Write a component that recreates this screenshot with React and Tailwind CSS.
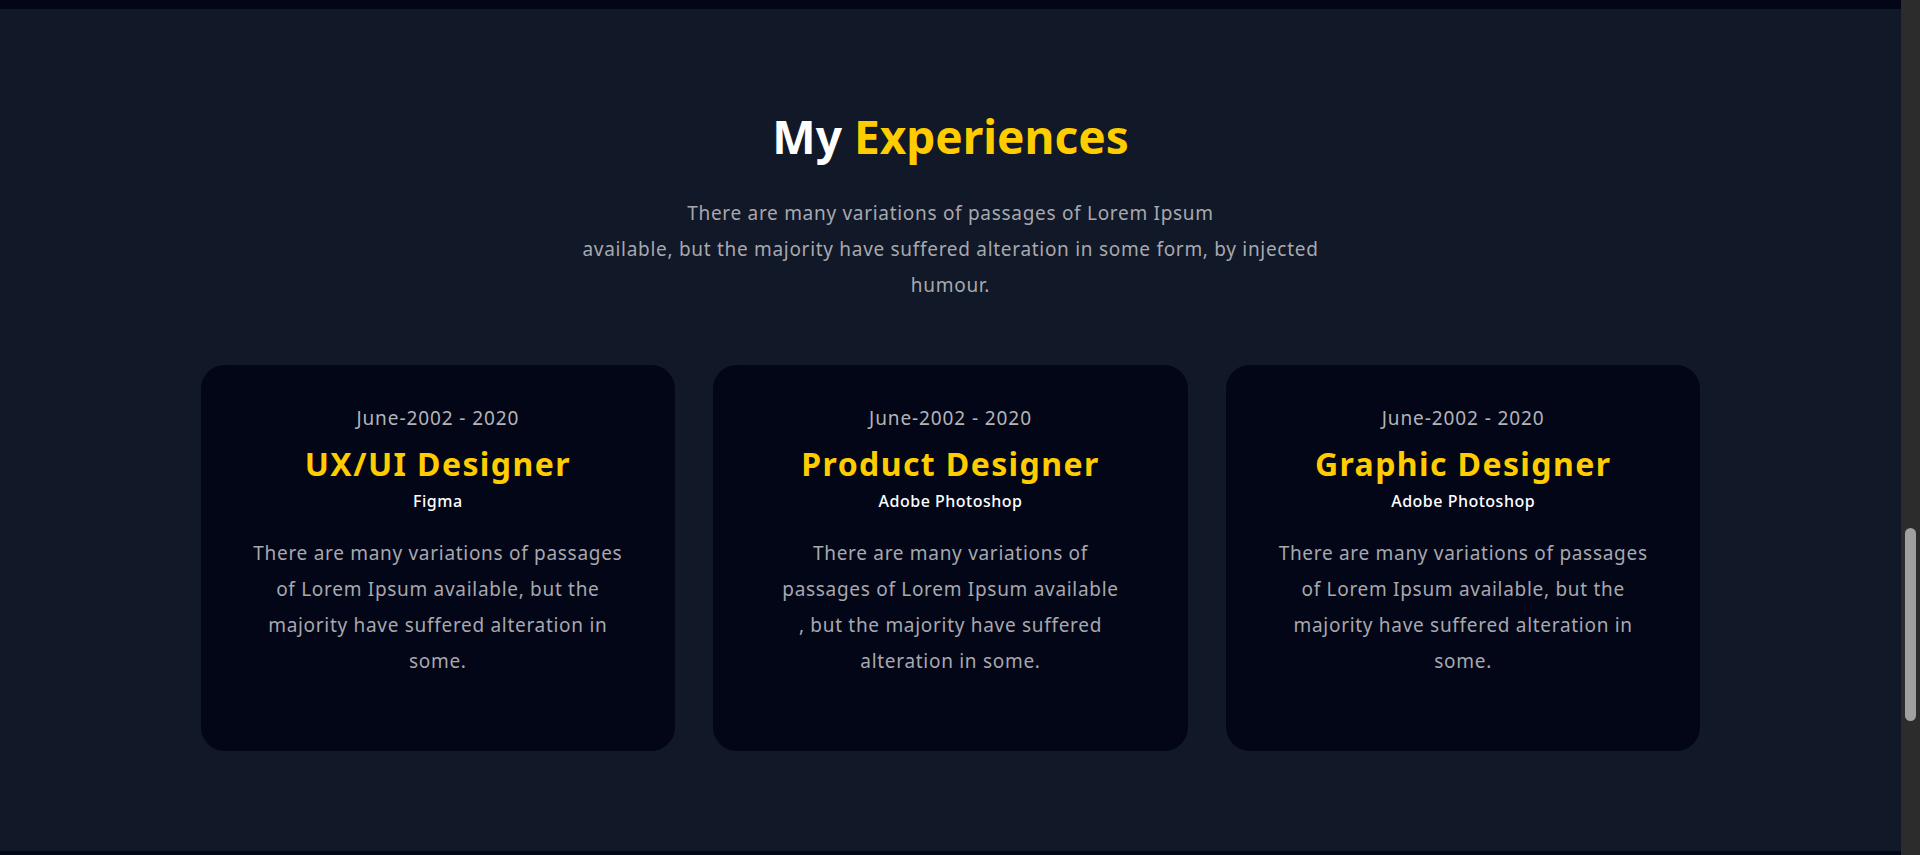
const experiences = [
  {
    period: "June-2002 - 2020",
    title: "UX/UI Designer",
    tool: "Figma",
    lines: [
      "There are many variations of passages",
      "of Lorem Ipsum available, but the",
      "majority have suffered alteration in",
      "some.",
    ],
  },
  {
    period: "June-2002 - 2020",
    title: "Product Designer",
    tool: "Adobe Photoshop",
    lines: [
      "There are many variations of",
      "passages of Lorem Ipsum available",
      ", but the majority have suffered",
      "alteration in some.",
    ],
  },
  {
    period: "June-2002 - 2020",
    title: "Graphic Designer",
    tool: "Adobe Photoshop",
    lines: [
      "There are many variations of passages",
      "of Lorem Ipsum available, but the",
      "majority have suffered alteration in",
      "some.",
    ],
  },
]

function ExperienceCard({ period, title, tool, lines }) {
  return (
    <div className="flex h-[386px] flex-col items-center rounded-3xl bg-[#020617] pt-[39px] text-center">
      <p className="text-[19px] leading-[28px] tracking-[0.9px] text-[#b4b4b8]">{period}</p>
      <h3 className="mt-3 text-[32px] font-bold leading-[40px] tracking-[1.4px] text-[#ffcc00]">{title}</h3>
      <p className="mt-[7px] text-[16px] font-medium leading-[20px] tracking-[0.5px] text-white">{tool}</p>
      <p className="mt-6 text-[19px] leading-[36px] tracking-[0.7px] text-[#a8a8ae]">
        {lines.map((line, i) => (
          <span key={i} className="block whitespace-nowrap">
            {line}
          </span>
        ))}
      </p>
    </div>
  )
}

export default function App() {
  return (
    <div className="flex h-[855px] w-full overflow-hidden bg-[#111827] font-['Noto_Sans',sans-serif]">
      <div className="flex flex-1 flex-col">
        <div className="h-[9px] bg-[#020617]" />

        {/* Experiences section */}
        <section className="flex flex-1 flex-col items-center pt-[101px]">
          <h2 className="text-[46px] font-bold leading-[53px] text-white">
            My <span className="text-[#ffcc00]">Experiences</span>
          </h2>
          <p className="mt-8 max-w-[780px] text-center text-[19px] leading-[36px] tracking-[0.7px] text-[#a8a8ae]">
            There are many variations of passages of Lorem Ipsum
            <br />
            available, but the majority have suffered alteration in some form, by injected humour.
          </p>

          <div className="mt-[62px] grid w-[1500px] grid-cols-3 gap-[38px]">
            {experiences.map((exp) => (
              <ExperienceCard key={exp.title} {...exp} />
            ))}
          </div>
        </section>

        <div className="h-[4px] bg-[#020617]" />
      </div>

      {/* scrollbar */}
      <div className="flex w-[19px] flex-col items-center bg-[#2c2c2c] pt-[528px]">
        <div className="h-[193px] w-[11px] rounded-full bg-[#a0a0a0]" />
      </div>
    </div>
  )
}
